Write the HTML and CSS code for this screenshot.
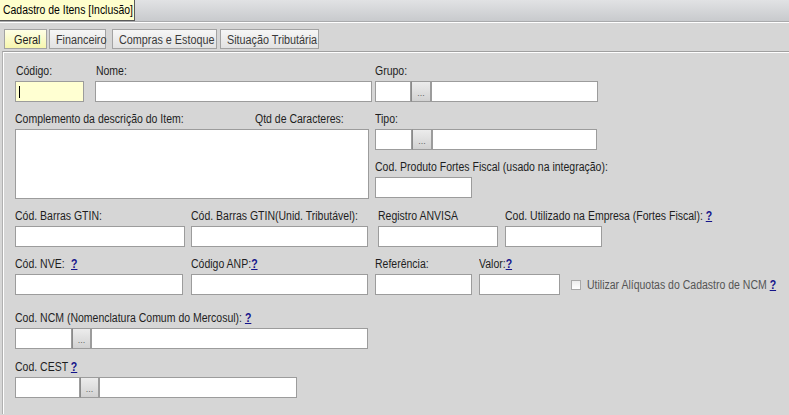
FILE: index.html
```html
<!DOCTYPE html>
<html lang="pt-BR">
<head>
<meta charset="utf-8">
<title>Cadastro de Itens</title>
<link rel="stylesheet" href="styles.css">
</head>
<body>
<div class="titlebar"><span class="title"><span class="title-text">Cadastro de Itens [Inclusão]</span></span></div>
<div class="tabs">
  <span class="tab tab-geral active"><span class="tt">Geral</span></span>
  <span class="tab tab-fin"><span class="tt">Financeiro</span></span>
  <span class="tab tab-comp"><span class="tt">Compras e Estoque</span></span>
  <span class="tab tab-sit"><span class="tt">Situação Tributária</span></span>
</div>
<div class="panel">
  <div class="row row1">
    <div class="field f-codigo"><label>Código:</label><div class="input yellow"><span class="caret"></span></div></div>
    <div class="field f-nome"><label>Nome:</label><div class="input"></div></div>
    <div class="field f-grupo"><label>Grupo:</label>
      <div class="combo"><div class="input w36"></div><div class="btn w20">...</div><div class="input w167"></div></div>
    </div>
  </div>

  <div class="row row2">
    <div class="field f-compl">
      <div class="labels"><label class="compl">Complemento da descrição do Item:</label><label class="qtd">Qtd de Caracteres:</label></div>
      <div class="input textarea"></div>
    </div>
    <div class="rightcol">
      <div class="field"><label>Tipo:</label>
        <div class="combo"><div class="input w37"></div><div class="btn w20">...</div><div class="input w165"></div></div>
      </div>
      <div class="field f-prod"><label>Cod. Produto Fortes Fiscal (usado na integração):</label><div class="input w97"></div></div>
    </div>
  </div>

  <div class="row row3">
    <div class="field f-gtin"><label>Cód. Barras GTIN:</label><div class="input"></div></div>
    <div class="field f-gtinu"><label>Cód. Barras GTIN(Unid. Tributável):</label><div class="input"></div></div>
    <div class="field f-anvisa"><label>Registro ANVISA</label><div class="input"></div></div>
    <div class="field f-utiliz"><label>Cod. Utilizado na Empresa (Fortes Fiscal): <a class="help">?</a></label><div class="input"></div></div>
  </div>

  <div class="row row4">
    <div class="field f-nve"><label>Cód. NVE: <a class="help help-nve">?</a></label><div class="input"></div></div>
    <div class="field f-anp"><label>Código ANP:<a class="help">?</a></label><div class="input"></div></div>
    <div class="field f-ref"><label>Referência:</label><div class="input"></div></div>
    <div class="field f-valor"><label>Valor:<a class="help">?</a></label><div class="input"></div></div>
    <div class="check"><span class="box"></span><span class="check-text">Utilizar Alíquotas do Cadastro de NCM <a class="help">?</a></span></div>
  </div>

  <div class="row row5">
    <div class="field"><label>Cod. NCM (Nomenclatura Comum do Mercosul): <a class="help">?</a></label>
      <div class="combo"><div class="input w57"></div><div class="btn w19">...</div><div class="input w277"></div></div>
    </div>
  </div>

  <div class="row row6">
    <div class="field"><label>Cod. CEST <a class="help">?</a></label>
      <div class="combo"><div class="input w65"></div><div class="btn w19">...</div><div class="input w198"></div></div>
    </div>
  </div>
</div>
</body>
</html>
```

FILE: styles.css
```css
html, body {
  margin: 0;
  padding: 0;
  background: #d6d6d6;
  width: 789px;
  height: 415px;
  overflow: hidden;
}
body {
  font-family: "Liberation Sans", Arial, sans-serif;
  font-size: 12px;
  color: #1e1e1e;
}

.titlebar {
  height: 22px;
  box-sizing: border-box;
  background: linear-gradient(#e1e2e4, #c8cacd);
  border-bottom: 1px solid #a9aaac;
  box-shadow: 0 1px 0 #ffffff;
  display: flex;
  align-items: flex-start;
}
.title {
  display: block;
  height: 21px;
  box-sizing: border-box;
  padding: 3px 0 0 3px;
  width: 135px;
  background: #fefecc;
  border-right: 1px solid #5a5a5a;
  border-bottom: 1px solid #5a5a5a;
  color: #000;
  font-size: 12.5px;
  white-space: nowrap;
}
.title-text {
  display: inline-block;
  transform: scaleX(0.835);
  transform-origin: 0 0;
}

.tabs {
  display: flex;
  height: 28px;
  padding: 6px 0 0 4px;
  box-sizing: border-box;
  margin-top: 1px;
}
.tab {
  height: 20px;
  box-sizing: border-box;
  border: 1px solid #a3a3a3;
  background: linear-gradient(#f6f6f6, #e2e2e2);
  color: #3a3a3a;
  padding: 3px 0 0 6px;
  font-size: 12px;
  white-space: nowrap;
  flex-shrink: 0;
}
.tt {
  display: inline-block;
  transform: scaleX(0.9);
  transform-origin: 0 0;
}
.tab-geral { width: 43px; padding-left: 9px; margin-right: 2px; color: #222; background: linear-gradient(#ffffe6, #f6f6ae); }
.tab-fin { width: 57px; margin-right: 6px; }
.tab-comp { width: 105px; margin-right: 3px; }
.tab-sit { width: 99px; }

.panel {
  margin-left: 2px;
  border-top: 1px solid #a0a0a0;
  border-left: 1px solid #b0b0b0;
  box-shadow: inset 1px 1px 0 #ffffff;
  padding: 12px 0 0 12px;
  height: 363px;
  box-sizing: border-box;
}

.row { display: flex; align-items: flex-start; }
.row > * { flex-shrink: 0; }
.row2, .row3, .row4 { margin-top: 10px; }
.row5 { margin-top: 16px; }
.row6 { margin-top: 11px; }

.field { display: flex; flex-direction: column; flex-shrink: 0; }
label {
  display: block;
  height: 15px;
  line-height: 15px;
  margin-bottom: 2px;
  white-space: nowrap;
  transform: scaleX(0.875);
  transform-origin: 0 0;
}
.f-compl { width: 354px; }
.labels { display: flex; height: 15px; margin-bottom: 2px; }
.labels label { margin-bottom: 0; flex-shrink: 0; }
.compl { width: 240px; }

.input {
  height: 21px;
  box-sizing: border-box;
  background: #ffffff;
  border: 1px solid #9c9c9c;
  flex-shrink: 0;
}
.yellow { background: #ffffd2; position: relative; }
.caret {
  position: absolute;
  left: 3px;
  top: 4px;
  width: 1px;
  height: 12px;
  background: #000;
}
.textarea { width: 354px; height: 70px; }

.combo { display: flex; }
.btn {
  height: 21px;
  box-sizing: border-box;
  border: 1px solid #9c9c9c;
  border-left-color: #8a8a8a;
  background: linear-gradient(#ececec, #d2d2d2);
  color: #666;
  font-size: 9px;
  text-align: center;
  line-height: 22px;
  flex-shrink: 0;
}

.w19 { width: 19px; }
.w20 { width: 20px; }
.w36 { width: 36px; }
.w37 { width: 37px; }
.w57 { width: 57px; }
.w65 { width: 65px; }
.w97 { width: 97px; }
.w165 { width: 165px; }
.w167 { width: 167px; }
.w198 { width: 198px; }
.w277 { width: 277px; }

.f-codigo { width: 69px; }
.f-nome { width: 277px; margin-left: 11px; }
.f-grupo { margin-left: 3px; }
.f-codigo label, .f-nome label { padding-left: 1px; }

.rightcol { margin-left: 6px; display: flex; flex-direction: column; }
.f-prod { margin-top: 10px; }

.f-gtin { width: 170px; }
.f-gtinu { width: 177px; margin-left: 6px; }
.f-anvisa { width: 120px; margin-left: 10px; }
.f-utiliz { width: 97px; margin-left: 7px; }

.f-nve { width: 168px; }
.f-anp { width: 177px; margin-left: 8px; }
.f-ref { width: 97px; margin-left: 7px; }
.f-valor { width: 81px; margin-left: 7px; }

.help {
  color: #14148a;
  font-weight: bold;
  text-decoration: underline;
  font-size: 12px;
}
.help-nve { margin-left: 4px; }

.check {
  display: flex;
  align-items: center;
  margin-left: 11px;
  margin-top: 17px;
  height: 21px;
  color: #555;
  white-space: nowrap;
}
.box {
  width: 10px;
  height: 10px;
  box-sizing: border-box;
  border: 1px solid #a8a8a8;
  background: linear-gradient(#ececec, #ffffff);
  margin-right: 6px;
  flex-shrink: 0;
}
.check-text {
  display: inline-block;
  transform: scaleX(0.875);
  transform-origin: 0 50%;
}
```
